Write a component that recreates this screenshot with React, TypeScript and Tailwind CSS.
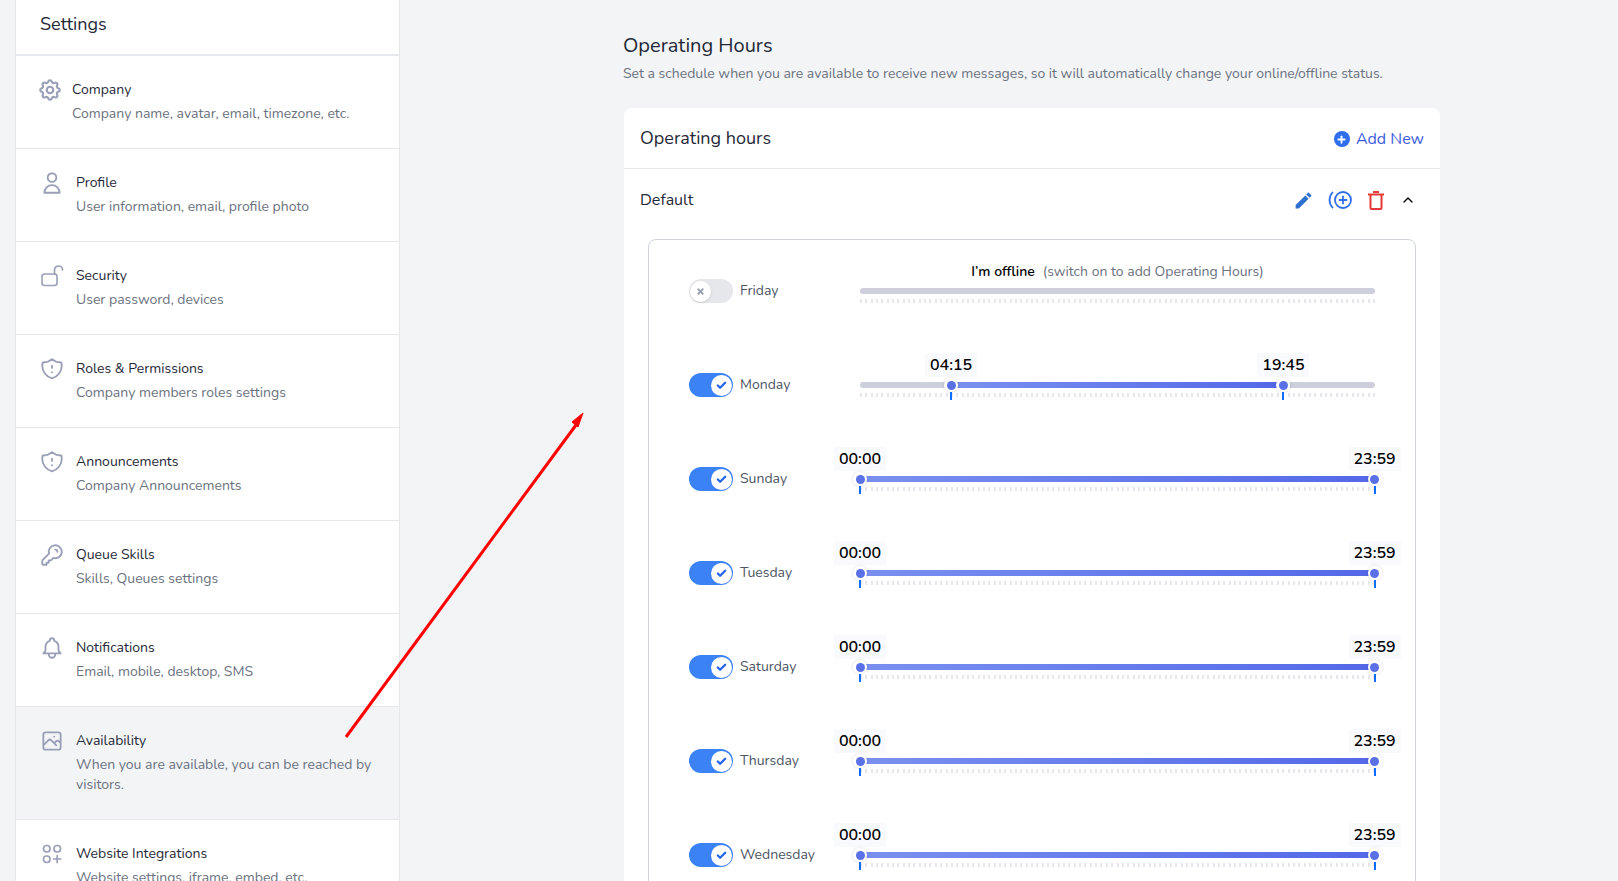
import { Check, ChevronUp, Plus, X } from 'lucide-react';
import { HiOutlineBell, HiOutlineCog, HiOutlineKey, HiOutlinePhotograph, HiOutlineShieldExclamation, HiOutlineUser } from 'react-icons/hi';
import type { ReactNode } from 'react';

const LockOpen = () => (
    <svg width="23" height="22" viewBox="0 0 23 22" fill="none" stroke="currentColor" strokeWidth="1.6" strokeLinecap="round">
        <rect x="1" y="9" width="15" height="11.5" rx="2.5" />
        <path d="M13.5 9V5a4 4 0 0 1 8 0" />
    </svg>
);

const Integrations = () => (
    <svg width="20" height="20" viewBox="0 0 20 20" fill="none" stroke="currentColor" strokeWidth="1.7" strokeLinecap="round">
        <rect x="1.5" y="1.5" width="6.5" height="6.5" rx="3" />
        <rect x="12" y="1.5" width="6.5" height="6.5" rx="3" />
        <rect x="1.5" y="12" width="6.5" height="6.5" rx="3" />
        <path d="M15.2 11.5v7M11.7 15h7" />
    </svg>
);

const iconSize = 26;

const menu: { title: string; desc: string; icon: ReactNode; active?: boolean; wide?: boolean }[] = [
    { title: 'Company', desc: 'Company name, avatar, email, timezone, etc.', icon: <HiOutlineCog size={iconSize} className="shrink-0" />, wide: true },
    { title: 'Profile', desc: 'User information, email, profile photo', icon: <HiOutlineUser size={iconSize} className="shrink-0" /> },
    { title: 'Security', desc: 'User password, devices', icon: <LockOpen /> },
    { title: 'Roles & Permissions', desc: 'Company members roles settings', icon: <HiOutlineShieldExclamation size={iconSize} className="shrink-0" /> },
    { title: 'Announcements', desc: 'Company Announcements', icon: <HiOutlineShieldExclamation size={iconSize} className="shrink-0" /> },
    { title: 'Queue Skills', desc: 'Skills, Queues settings', icon: <HiOutlineKey size={iconSize} className="shrink-0" /> },
    { title: 'Notifications', desc: 'Email, mobile, desktop, SMS', icon: <HiOutlineBell size={iconSize} className="shrink-0" /> },
    { title: 'Availability', desc: 'When you are available, you can be reached by visitors.', icon: <HiOutlinePhotograph size={iconSize} className="shrink-0" />, active: true },
    { title: 'Website Integrations', desc: 'Website settings, iframe, embed, etc.', icon: <Integrations /> },
];

const days = [
    { day: 'Friday', on: false, from: 0, to: 96 },
    { day: 'Monday', on: true, from: 17, to: 79 },
    { day: 'Sunday', on: true, from: 0, to: 96 },
    { day: 'Tuesday', on: true, from: 0, to: 96 },
    { day: 'Saturday', on: true, from: 0, to: 96 },
    { day: 'Thursday', on: true, from: 0, to: 96 },
    { day: 'Wednesday', on: true, from: 0, to: 96 },
];

const STEP = 5.36;

const timeLabel = (tick: number) => {
    if (tick >= 96) return '23:59';
    const h = Math.floor(tick / 4);
    return `${String(h).padStart(2, '0')}:${String((tick % 4) * 15).padStart(2, '0')}`;
};

const Toggle = ({ on }: { on: boolean }) =>
    on ? (
        <div className="w-[44px] h-[24px] rounded-full bg-[#3b82f6] flex items-center justify-end pr-px shrink-0">
            <div className="w-[21px] h-[21px] rounded-full bg-white flex items-center justify-center">
                <Check size={11} strokeWidth={5} className="text-[#2563eb]" />
            </div>
        </div>
    ) : (
        <div className="w-[44px] h-[24px] rounded-full bg-[#e5e7eb] flex items-center pl-px shrink-0">
            <div className="w-[21px] h-[21px] rounded-full bg-white shadow flex items-center justify-center">
                <X size={9} strokeWidth={5} className="text-[#9ca3af]" />
            </div>
        </div>
    );

const Handle = ({ tick }: { tick: number }) => (
    <>
        <div style={{ left: tick * STEP - 26 }} className="absolute top-[-20px] w-[52px] h-[24px] bg-[#f9fafe] flex items-center justify-center text-[16px] font-semibold text-black">
            {timeLabel(tick)}
        </div>
        <div style={{ left: tick * STEP - 7 }} className="absolute top-[5px] w-[14px] h-[14px] rounded-full bg-white shadow-[0_0_4px_rgba(0,0,0,0.12)] flex items-center justify-center">
            <div className="w-[9px] h-[9px] rounded-full bg-[#5a70e6]" />
        </div>
        <div style={{ left: tick * STEP - 1 }} className="absolute top-[19px] w-[2px] h-[8px] bg-[#0d6efd]" />
    </>
);

const Slider = ({ on, from, to }: { on: boolean; from: number; to: number }) => (
    <div className="relative w-[515px] h-[24px]">
        <div className="absolute top-[9px] left-0 right-0 h-[6px] rounded-full bg-[#cdd0dc]" />
        <div className="absolute top-[20px] left-0 w-[516px] h-[4px] flex justify-between">
            {Array.from({ length: 97 }).map((_, i) => (
                <span key={i} className="w-[2px] h-[4px] bg-[#e5e7eb]" />
            ))}
        </div>
        {on ? (
            <>
                <div style={{ left: from * STEP, width: (to - from) * STEP }} className="absolute top-[9px] h-[6px] bg-gradient-to-r from-[#7a90f0] to-[#5468e8]" />
                <Handle tick={from} />
                <Handle tick={to} />
            </>
        ) : (
            <div className="absolute top-[-15px] left-0 right-0 text-center text-[14px] leading-[16px] text-[#6b7280]">
                <span className="font-semibold text-black">I’m offline</span>
                <span className="ml-2">(switch on to add Operating Hours)</span>
            </div>
        )}
    </div>
);

export default function App() {
    return (
        <div className="relative h-[881px] overflow-hidden bg-[#f3f4f6] flex font-['Nunito','Noto_Sans',sans-serif]">
            <aside className="ml-[15px] w-[385px] shrink-0 bg-white border-x border-[#e5e7eb]">
                <div className="h-[56px] pl-[24px] pt-[12px] border-b-2 border-[#e5e7eb] text-[18px] leading-[24px] text-[#1f2937]">Settings</div>
                {menu.map((m) => (
                    <div key={m.title} className={`flex items-start gap-[12px] pl-[24px] pr-[24px] pt-[24px] border-b border-[#e5e7eb] ${m.active ? 'h-[113px] bg-[#f3f4f6]' : 'h-[93px]'}`}>
                        <div className={`w-[24px] h-[24px] -mt-[2px] flex items-center justify-center text-[#9a9fb8] shrink-0 ${m.wide ? '-ml-[2px]' : '[&_path]:stroke-[1.7]'}`}>{m.icon}</div>
                        <div className={m.wide ? '-ml-[2px]' : ''}>
                            <div className="text-[14px] leading-[20px] text-[#1f2937]">{m.title}</div>
                            <div className="mt-[4px] text-[14px] leading-[20px] text-[#6b7280]">{m.desc}</div>
                        </div>
                    </div>
                ))}
            </aside>

            <main className="ml-[224px] w-[816px] shrink-0 pt-[32px]">
                <h1 className="-ml-px text-[20px] leading-[28px] text-[#1f2937]">Operating Hours</h1>
                <p className="-ml-px mt-[4px] text-[14px] leading-[20px] text-[#6b7280]">Set a schedule when you are available to receive new messages, so it will automatically change your online/offline status.</p>

                <section className="mt-[24px] bg-white rounded-t-lg">
                    <div className="h-[61px] px-[16px] flex items-center justify-between border-b border-[#e5e7eb]">
                        <span className="text-[18px] text-[#1f2937]">Operating hours</span>
                        <span className="mt-[2px] flex items-center gap-[6px] text-[16px] text-[#3b5bdb]">
                            <span className="w-[16px] h-[16px] rounded-full bg-[#2f6fed] flex items-center justify-center">
                                <Plus size={11} strokeWidth={4} className="text-white" />
                            </span>
                            Add New
                        </span>
                    </div>
                    <div className="h-[62px] pl-[16px] pr-[24px] flex items-center justify-between">
                        <span className="text-[16px] text-[#1f2937]">Default</span>
                        <div className="flex items-center">
                            <svg width="21" height="21" viewBox="0 0 24 24" fill="#2f6fd0">
                                <path d="M3 17.25V21h3.75L17.81 9.94l-3.75-3.75L3 17.25zM20.71 7.04c.39-.39.39-1.02 0-1.41l-2.34-2.34c-.39-.39-1.02-.39-1.41 0l-1.83 1.83 3.75 3.75 1.83-1.83z" />
                            </svg>
                            <svg width="25" height="20" viewBox="0 0 25 20" fill="none" stroke="#2f6fed" strokeWidth="1.8" strokeLinecap="round" className="ml-[14px]">
                                <path d="M4.5 2.5a11 11 0 0 0 0 15" />
                                <circle cx="15" cy="10" r="8" />
                                <path d="M15 6.5v7M11.5 10h7" />
                            </svg>
                            <svg width="16" height="19" viewBox="0 0 16 19" fill="none" stroke="#e53935" strokeWidth="2" className="ml-[15px]">
                                <path d="M0 3.5h16M5 1h6" />
                                <path d="M2.5 4v13a1 1 0 0 0 1 1h9a1 1 0 0 0 1-1V4" />
                            </svg>
                            <ChevronUp size={16} strokeWidth={2} className="ml-[16px] text-black" />
                        </div>
                    </div>
                    <div className="ml-[24px] w-[768px] mt-[8px] pt-[39px] pl-[40px] border border-[#d1d5db] rounded-lg flex flex-col gap-[70px] pb-[60px]">
                        {days.map((d) => (
                            <div key={d.day} className="flex items-center h-[24px]">
                                <Toggle on={d.on} />
                                <span className="ml-[7px] w-[120px] pb-[2px] text-[14px] text-[#4b5563]">{d.day}</span>
                                <Slider on={d.on} from={d.from} to={d.to} />
                            </div>
                        ))}
                    </div>
                </section>
            </main>

            {/* annotation arrow */}
            <svg className="absolute inset-0 pointer-events-none" width="1618" height="881" fill="none">
                <path d="M346 737L576 425" stroke="#ff0000" strokeWidth="3" />
                <path d="M583 413L572 422L578 427Z" fill="#ff0000" stroke="#ff0000" />
            </svg>
        </div>
    );
}
